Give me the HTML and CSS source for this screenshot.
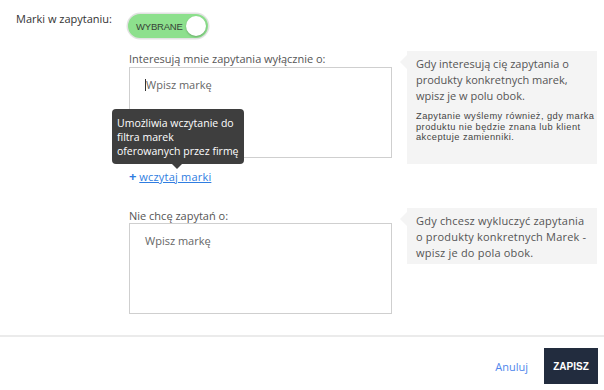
FILE: index.html
```html
<!DOCTYPE html>
<html>
<head>
    <title>Marki w zapytaniu</title>
    <link rel="stylesheet" href="styles.css">
</head>
<body>
    <div class="form">
        <div class="top-row">
            <div class="top-label">Marki w zapytaniu:</div>
            <div class="toggle">
                <span class="toggle-text">WYBRANE</span>
                <span class="knob"></span>
            </div>
        </div>

        <div class="section">
            <div class="field">
                <div class="field-label">Interesują mnie zapytania wyłącznie o:</div>
                <div class="box">
                    <span class="caret"></span><span class="placeholder">Wpisz markę</span>
                </div>
                <div class="tooltip">Umożliwia wczytanie do<br>filtra marek<br>oferowanych przez firmę</div>
                <a class="load-link" href="#"><span class="plus">+</span> <span class="link-text">wczytaj marki</span></a>
            </div>
            <div class="hint">
                <p class="hint-main">Gdy interesują cię zapytania o produkty konkretnych marek, wpisz je w polu obok.</p>
                <p class="hint-small">Zapytanie wyślemy również, gdy marka<br>produktu nie będzie znana lub klient<br>akceptuje zamienniki.</p>
            </div>
        </div>

        <div class="section second">
            <div class="field">
                <div class="field-label">Nie chcę zapytań o:</div>
                <div class="box">
                    <span class="placeholder">Wpisz markę</span>
                </div>
            </div>
            <div class="hint short">
                <p class="hint-main">Gdy chcesz wykluczyć zapytania<br>o produkty konkretnych Marek -<br>wpisz je do pola obok.</p>
            </div>
        </div>
    </div>

    <div class="footer">
        <a class="cancel" href="#">Anuluj</a>
        <button class="save">ZAPISZ</button>
    </div>
</body>
</html>
```

FILE: styles.css
```css
body {
    margin: 0;
    background: #fff;
    font-family: "Open Sans", "Noto Sans", sans-serif;
    color: #333;
}
.form {
    padding-top: 13px;
    height: 322px;
}
.top-row {
    display: flex;
    align-items: flex-start;
}
.top-label {
    width: 112px;
    padding-left: 16px;
    font-size: 11px;
    line-height: 14px;
    margin-top: -1px;
}
.toggle {
    width: 80px;
    height: 24px;
    border-radius: 12px;
    background: #8de08d;
    box-shadow: 0 0 0 1.5px #e2e2e2;
    display: flex;
    align-items: center;
    justify-content: space-between;
    padding: 0 2px 0 8px;
    box-sizing: border-box;
    margin-top: 1px;
}
.toggle-text {
    font-family: "Liberation Sans", Arial, sans-serif;
    font-size: 9.5px;
    letter-spacing: -0.2px;
    color: #374237;
}
.knob {
    width: 20px;
    height: 20px;
    border-radius: 50%;
    background: #fff;
    box-shadow: 0 1px 2px rgba(0,0,0,0.25);
}
.section {
    display: flex;
    align-items: flex-start;
    gap: 15px;
    margin-left: 129px;
    margin-top: 14px;
}
.section.second {
    margin-top: 23px;
}
.field {
    position: relative;
    width: 263px;
}
.field-label {
    font-size: 11px;
    line-height: 14px;
    color: #555;
    margin-bottom: 1px;
}
.second .field-label {
    margin-bottom: 0;
}
.box {
    height: 91px;
    border: 1px solid #cfcfcf;
    box-sizing: border-box;
    padding: 10px 15px;
    font-size: 11px;
    line-height: 14px;
}
.caret {
    display: inline-block;
    width: 1px;
    height: 12px;
    background: #333;
    vertical-align: -2px;
}
.placeholder {
    color: #666;
}
.tooltip {
    position: absolute;
    left: -17px;
    top: 57px;
    width: 132px;
    height: 55px;
    box-sizing: border-box;
    padding: 7px 5px;
    background: #3e3e3e;
    color: #fff;
    font-size: 10.5px;
    line-height: 14px;
    white-space: nowrap;
    border-radius: 4px;
}
.tooltip::after {
    content: "";
    position: absolute;
    left: 60px;
    bottom: -5px;
    border-left: 5px solid transparent;
    border-right: 5px solid transparent;
    border-top: 5px solid #3e3e3e;
}
.load-link {
    display: inline-block;
    margin-top: 11px;
    font-size: 11px;
    line-height: 14px;
    color: #2f7de1;
    text-decoration: none;
}
.plus {
    font-weight: bold;
    font-size: 13px;
}
.link-text {
    text-decoration: underline;
    letter-spacing: 0.2px;
}
.hint {
    position: relative;
    width: 190px;
    height: 113px;
    box-sizing: border-box;
    background: #f4f4f4;
    padding: 5px 9px;
    margin-top: -1px;
}
.hint.short {
    height: 56px;
}
.hint::before {
    content: "";
    position: absolute;
    left: -7px;
    top: 4px;
    border-top: 7px solid transparent;
    border-bottom: 7px solid transparent;
    border-right: 7px solid #f4f4f4;
}
.hint-main {
    margin: 0;
    font-size: 11px;
    line-height: 16px;
    color: #555;
}
.short .hint-main {
    letter-spacing: 0.2px;
    white-space: nowrap;
}
.hint-small {
    margin: 7px 0 0;
    font-family: "Liberation Sans", Arial, sans-serif;
    font-size: 9.3px;
    line-height: 10.5px;
    letter-spacing: 0.45px;
    white-space: nowrap;
    color: #444;
}
.footer {
    border-top: 2px solid #ebebeb;
    display: flex;
    justify-content: flex-end;
    align-items: center;
    padding: 11px 6px 0 0;
    gap: 16px;
}
.cancel {
    font-size: 11px;
    color: #4f86ec;
    text-decoration: none;
}
.save {
    width: 54px;
    height: 36px;
    border: none;
    background: #222c3e;
    color: #fff;
    font-family: "Liberation Sans", Arial, sans-serif;
    font-weight: bold;
    font-size: 10px;
    padding: 0;
}
```
